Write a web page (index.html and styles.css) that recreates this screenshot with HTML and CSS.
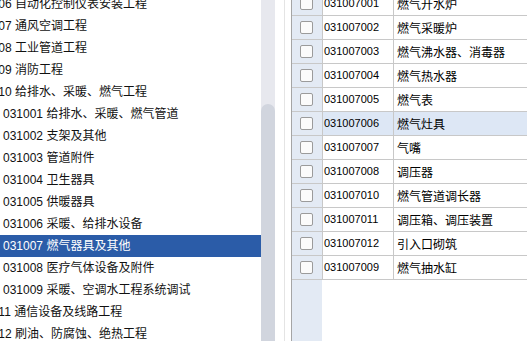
FILE: index.html
```html
<!DOCTYPE html>
<html lang="zh-CN">
<head>
    <meta charset="UTF-8">
    <title>清单选择</title>
    <link rel="stylesheet" href="styles.css">
</head>
<body>
    <div class="window">
        <aside class="tree">
            <ul>
                <li>0306 自动化控制仪表安装工程</li>
                <li>0307 通风空调工程</li>
                <li>0308 工业管道工程</li>
                <li>0309 消防工程</li>
                <li>0310 给排水、采暖、燃气工程</li>
                <li class="child">031001 给排水、采暖、燃气管道</li>
                <li class="child">031002 支架及其他</li>
                <li class="child">031003 管道附件</li>
                <li class="child">031004 卫生器具</li>
                <li class="child">031005 供暖器具</li>
                <li class="child">031006 采暖、给排水设备</li>
                <li class="child selected">031007 燃气器具及其他</li>
                <li class="child">031008 医疗气体设备及附件</li>
                <li class="child">031009 采暖、空调水工程系统调试</li>
                <li>0311 通信设备及线路工程</li>
                <li>0312 刷油、防腐蚀、绝热工程</li>
            </ul>
        </aside>
        <div class="scrollbar"><div class="thumb"></div></div>
        <div class="splitter"></div>
        <main class="grid">
            <div class="row"><div class="check"><span class="box"></span></div><div class="code">031007001</div><div class="name">燃气开水炉</div></div>
            <div class="row"><div class="check"><span class="box"></span></div><div class="code">031007002</div><div class="name">燃气采暖炉</div></div>
            <div class="row"><div class="check"><span class="box"></span></div><div class="code">031007003</div><div class="name">燃气沸水器、消毒器</div></div>
            <div class="row"><div class="check"><span class="box"></span></div><div class="code">031007004</div><div class="name">燃气热水器</div></div>
            <div class="row"><div class="check"><span class="box"></span></div><div class="code">031007005</div><div class="name">燃气表</div></div>
            <div class="row hover"><div class="check"><span class="box"></span></div><div class="code">031007006</div><div class="name">燃气灶具</div></div>
            <div class="row"><div class="check"><span class="box"></span></div><div class="code">031007007</div><div class="name">气嘴</div></div>
            <div class="row"><div class="check"><span class="box"></span></div><div class="code">031007008</div><div class="name">调压器</div></div>
            <div class="row"><div class="check"><span class="box"></span></div><div class="code">031007010</div><div class="name">燃气管道调长器</div></div>
            <div class="row"><div class="check"><span class="box"></span></div><div class="code">031007011</div><div class="name">调压箱、调压装置</div></div>
            <div class="row"><div class="check"><span class="box"></span></div><div class="code">031007012</div><div class="name">引入口砌筑</div></div>
            <div class="row"><div class="check"><span class="box"></span></div><div class="code">031007009</div><div class="name">燃气抽水缸</div></div>
        </main>
    </div>
</body>
</html>
```
FILE: styles.css
```css
body {
    margin: 0;
    background-color: #fff;
    color: #000;
    font-family: "Liberation Sans", "Noto Sans CJK SC", sans-serif;
    overflow: hidden;
}
.window {
    display: flex;
    width: 527px;
    height: 341px;
    overflow: hidden;
}
.tree {
    width: 261px;
    flex-shrink: 0;
    overflow: hidden;
}
.tree ul {
    list-style: none;
    margin: -7px 0 0 -15px;
    padding: 0;
}
.tree li {
    height: 22px;
    line-height: 22px;
    font-size: 12px;
    color: #111;
    white-space: nowrap;
}
.tree li.child {
    padding-left: 18px;
}
.tree li.selected {
    background-color: #2b5ca8;
    color: #fff;
}
.scrollbar {
    width: 14px;
    flex-shrink: 0;
    background-color: #e7e8ee;
    display: flex;
    flex-direction: column;
}
.thumb {
    margin-top: 104px;
    flex-grow: 1;
    background-color: #d1d5de;
    border-radius: 7px 7px 0 0;
}
.splitter {
    width: 9px;
    flex-shrink: 0;
    border-right: 1px solid #e4e4e4;
}
.grid {
    flex-grow: 1;
    margin-left: 6px;
    margin-top: -8px;
    border-left: 1px solid #a5a5a5;
    background: linear-gradient(to right, #e3eaf4 30px, #fff 30px);
}
.row {
    display: flex;
    height: 24px;
    box-sizing: border-box;
    border-bottom: 1px solid #c8c8c8;
}
.check {
    width: 31px;
    flex-shrink: 0;
    box-sizing: border-box;
    border-right: 1px solid #c8c8c8;
    display: flex;
    align-items: center;
    justify-content: center;
}
.box {
    width: 13px;
    height: 13px;
    box-sizing: border-box;
    border: 1px solid #9b9b9b;
    border-radius: 2px;
    background-color: #fbfbfb;
    margin-right: 1px;
}
.code {
    width: 71px;
    flex-shrink: 0;
    box-sizing: border-box;
    border-right: 1px solid #c8c8c8;
    background-color: #fff;
    padding-left: 1px;
    font-size: 11px;
    line-height: 23px;
}
.name {
    flex-grow: 1;
    background-color: #fff;
    padding-left: 3px;
    font-family: "Noto Sans CJK SC", sans-serif;
    font-size: 12px;
    line-height: 23px;
    white-space: nowrap;
}
.row.hover .code,
.row.hover .name {
    background-color: #dde7f5;
}
```
